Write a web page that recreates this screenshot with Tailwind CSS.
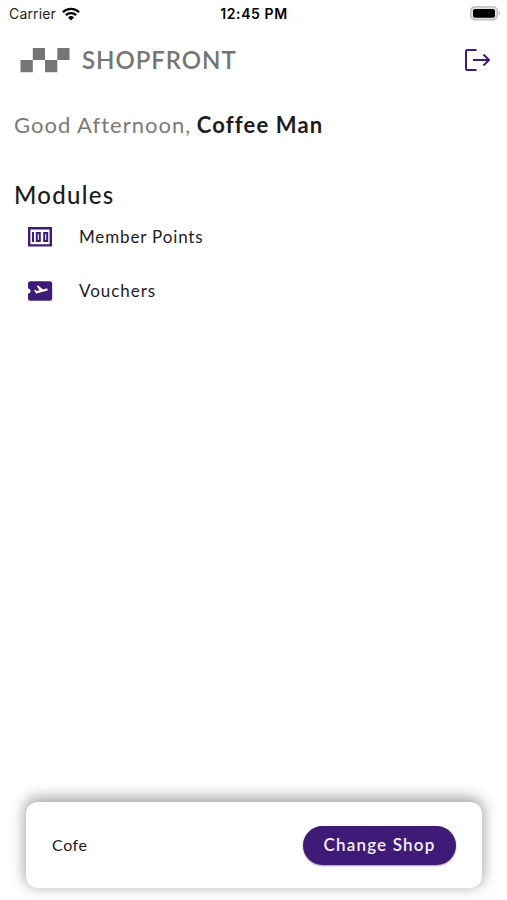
<!DOCTYPE html>
<html lang="en">
<head>
<meta charset="utf-8">
<title>Shopfront</title>
<script src="https://cdn.jsdelivr.net/npm/@tailwindcss/browser@4"></script>
</head>
<body class="bg-white">
<main class="flex h-[900px] w-[507px] flex-col overflow-hidden bg-white font-['Lato',sans-serif] text-[#1c1b1f]">
  <div class="grid h-7 shrink-0 grid-cols-3 items-center pr-[8px] pl-[9px] font-['Inter',sans-serif] text-black">
    <div class="flex items-center gap-[6px]">
      <span class="text-[14px] leading-7 tracking-[0.15px] text-[#222]">Carrier</span>
      <svg class="-mt-px h-[14px] w-[18px]" viewBox="0 0 18 14" fill="none" stroke="#000" stroke-width="2.3"><path d="M.9 5.2a11.6 11.6 0 0 1 16.2 0M3.8 8.2a7.5 7.5 0 0 1 10.4 0"/><path d="M9 13.4 6 10.5a4.3 4.3 0 0 1 6 0z" fill="#000" stroke="none"/></svg>
    </div>
    <span class="-mt-[2px] text-center text-[14px] font-semibold tracking-[0.6px]">12:45 PM</span>
    <svg class="-mt-[2px] -mr-[2px] h-[15px] w-[31px] justify-self-end" viewBox="0 0 31 15"><rect x=".8" y=".8" width="26.4" height="13" rx="4" fill="#e4e4e4" stroke="#b5b5b5" stroke-width="1.2"/><rect x="3" y="3" width="22" height="8.8" rx="2" fill="#000"/><path d="M28.7 5q2.4 2.3 0 4.6z" fill="#aaa"/></svg>
  </div>
  <header class="flex h-16 shrink-0 items-center justify-between pr-4 pl-5">
    <div class="flex items-center gap-3">
      <svg class="h-[26px] w-[50px]" viewBox="0 0 50 26" fill="#757575"><path d="M.5 13h12.3v12.2H.5zM12.8 1H25v12H12.800zM25 13h12.300v12.200H25zM37.300 1h12.200v12H37.300z"/></svg>
      <span class="text-[24px] font-semibold tracking-[0.95px] text-[#757575]">SHOPFRONT</span>
    </div>
    <svg class="-mt-px h-6 w-[28px]" viewBox="0 0 28 24" fill="none" stroke="#3e1b77" stroke-width="2"><path d="M13.500 2H4.500Q3 2 3 3.500v17Q3 22 4.500 22h9M10 12h16M20.500 6.500 26 12l-5.500 5.500"/></svg>
  </header>
  <section class="flex flex-col px-[14px]">
    <p class="mt-[18px] text-[22px] leading-[30px] whitespace-nowrap"><span class="tracking-[1px] text-[#7a7a7a]">Good Afternoon,</span> <b class="tracking-[1.15px]">Coffee Man</b></p>
    <h1 class="mt-10 text-[24px] leading-[30px] font-medium"><span class="tracking-[1.3px]">Modules</span></h1>
    <ul class="flex flex-col">
      <li class="flex h-[54px] items-start gap-[26px] pl-[13px]">
        <svg class="mt-[17px] h-5 w-[26px]" viewBox="0 0 26 20" fill="none" stroke="#3e1b77"><path stroke-width="2.400" d="M2.200 1.200h21.600v17.200H2.200z"/><path stroke-width="2" d="M6 5v10M9.800 6h3v8h-3zM17.200 6h3v8h-3z"/></svg>
        <span class="mt-[15px] text-[17px] leading-6"><span class="tracking-[0.85px]">Member Points</span></span>
      </li>
      <li class="flex h-[54px] items-start gap-[26px] pl-[13px]">
        <svg class="mt-[17px] h-5 w-[26px]" viewBox="0 0 26 20"><path fill="#3e1b77" d="M3.500.3h19.200q2.500 0 2.500 2.500v14.400q0 2.500-2.500 2.500H3.500Q1 19.700 1 17.200v-4.700a2.500 2.500 0 0 0 0-5V2.800Q1 .3 3.500.3z"/><path fill="#fff" d="m7 9 1.200-.3 1.700 1.300 2.700-.7-3-4.300 1.500-.4 5 3.800 3-.8q1.300-.3 1.600.8.300 1-1 1.400L9.200 12.600z"/></svg>
        <span class="mt-[15px] text-[17px] leading-6"><span class="tracking-[0.95px]">Vouchers</span></span>
      </li>
    </ul>
  </section>
  <footer class="mr-[25px] ml-[26px] mt-auto mb-3 flex h-[86px] shrink-0 items-center justify-between rounded-[12px] bg-white px-[26px] shadow-[0_-3px_14px_2px_rgba(0,0,0,0.34)]">
    <span class="text-[16px]"><span class="tracking-[0.6px]">Cofe</span></span>
    <button class="flex h-[39px] w-[153px] items-center justify-center rounded-full bg-[#3e1b77] text-[17px] font-semibold text-[#f7efff] shadow-[0_1px_2px_rgba(0,0,0,0.4)]"><span class="tracking-[1.2px]">Change Shop</span></button>
  </footer>
</main>
</body>
</html>
